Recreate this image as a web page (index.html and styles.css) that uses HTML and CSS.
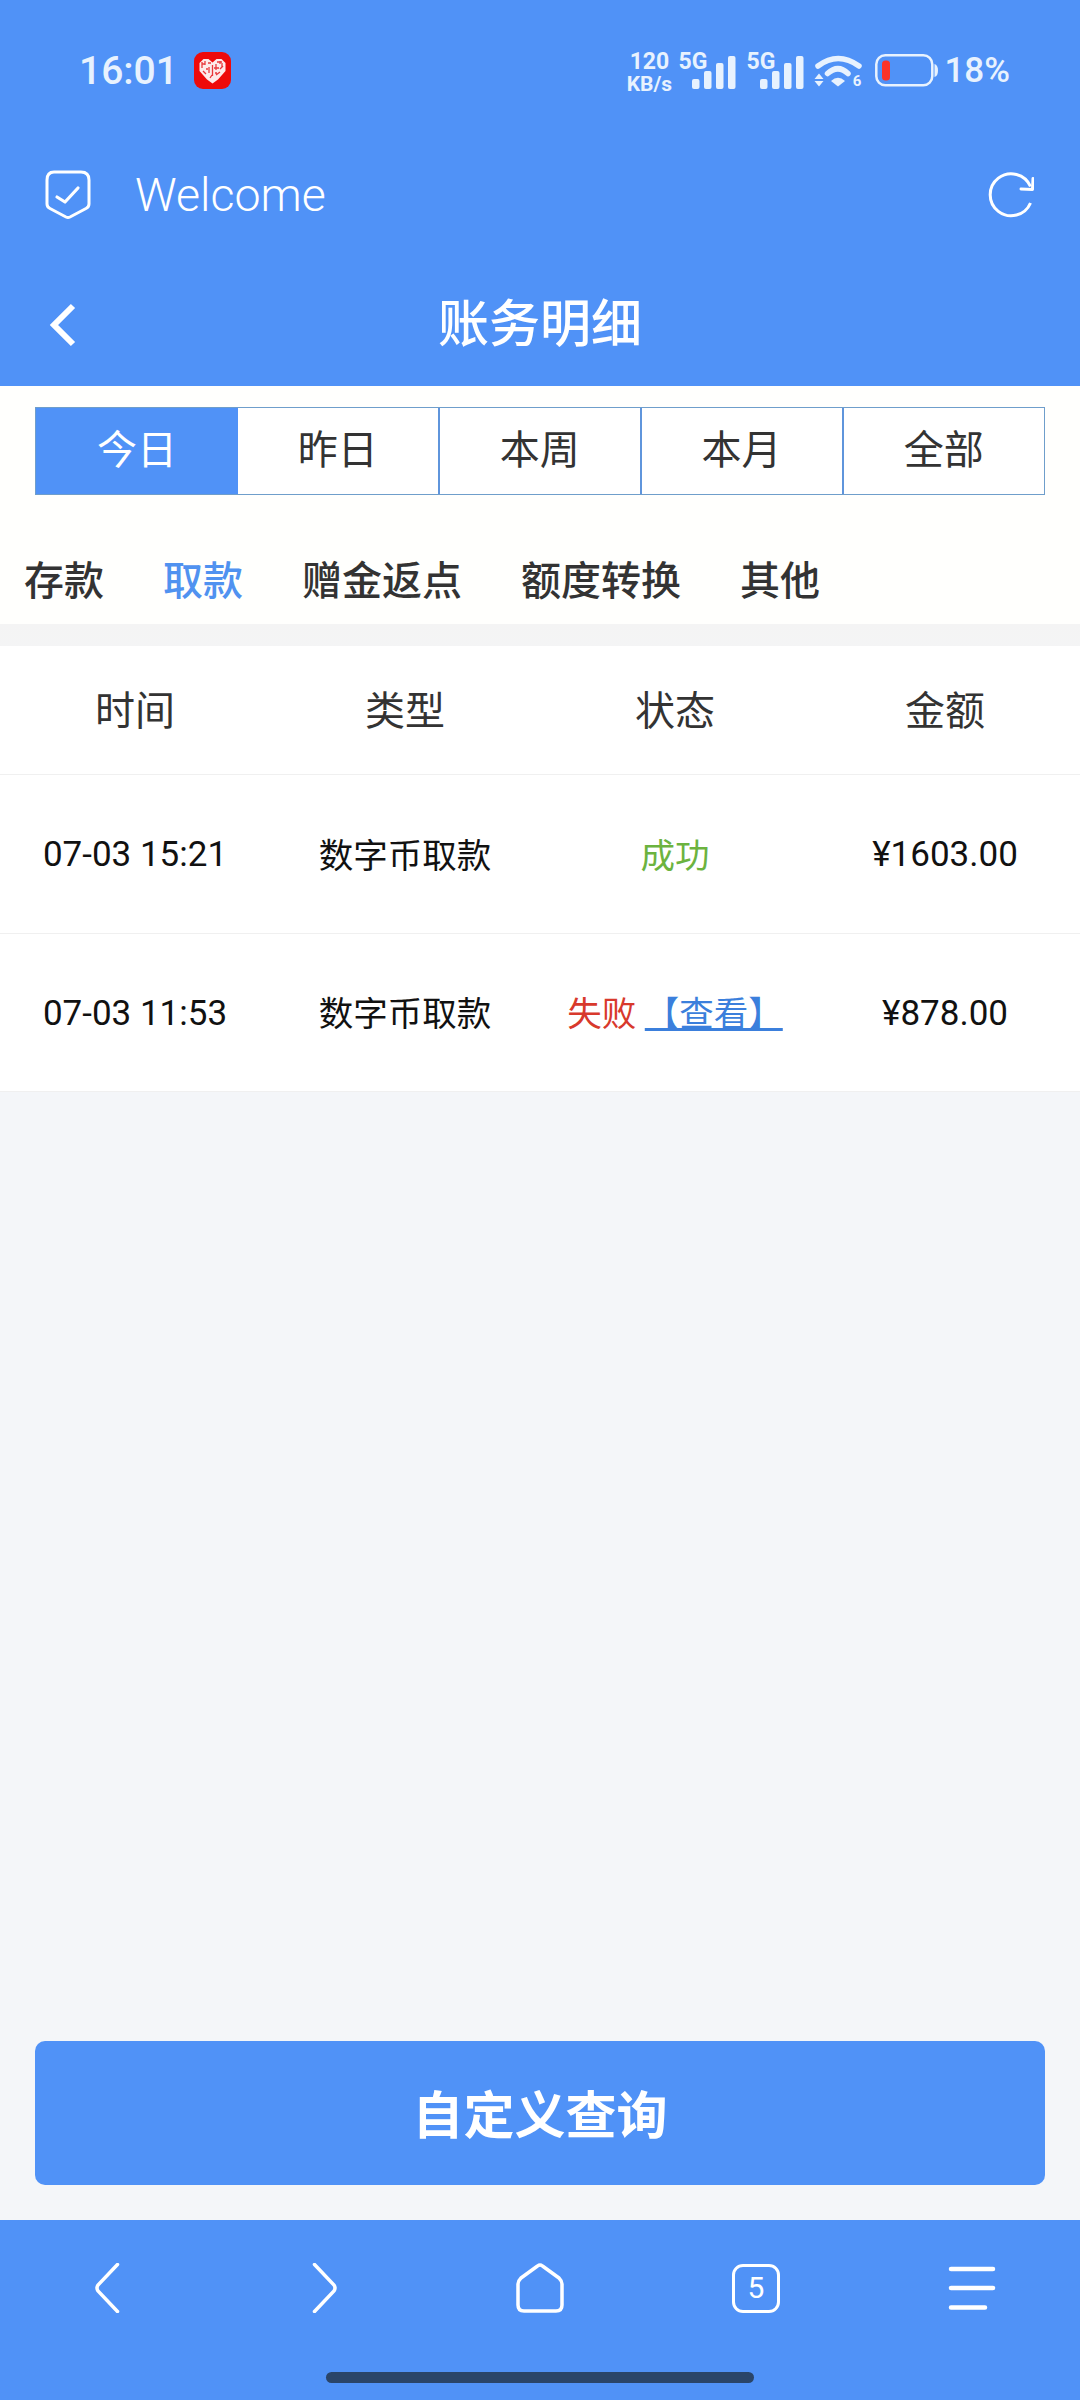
FILE: index.html
```html
<!DOCTYPE html>
<html lang="zh-CN">
<head>
<meta charset="utf-8">
<title>账务明细</title>
<link rel="stylesheet" href="styles.css">
</head>
<body>
<div class="page">
  <header class="top">
    <div class="status">
      <div class="status-left">
        <span class="time">16:01</span>
        <svg class="pdd" viewBox="0 0 37 37" width="37" height="37">
          <rect width="37" height="37" rx="9" fill="#ee0a0a"/>
          <path d="M18.500 10.500 L22.500 7 H27.500 L31.500 11 V19 L24 27.500 L18.500 31.500 L13 27.500 L5.500 19 V11 L9.500 7 H14.500Z" fill="#fdeaea"/>
          <path d="M8 10v6M11 9v4M9 19l3 3M14 11h3M15 15v6M18.500 13v11M22 12v6M20 16h5M26 9v3M23 10h5M29 14l-3 3M22 23l4-3M12 17h2M16 26l2-3M8 12h3M28 11v4M21 21h2" stroke="#e8383c" stroke-width="1.300" fill="none"/>
        </svg>
      </div>
      <div class="status-right">
        <div class="speed"><span class="speed-num">120</span><span class="speed-unit">KB/s</span></div>
        <div class="signal">
          <span class="net">5G</span>
          <svg class="bars" viewBox="0 0 44 33" width="44" height="33"><rect x="0" y="23" width="7.500" height="10" rx="2"/><rect x="12" y="15" width="7.500" height="18" rx="2"/><rect x="24" y="7" width="7.500" height="26" rx="2"/><rect x="36" y="0" width="7.500" height="33" rx="2"/></svg>
        </div>
        <div class="signal">
          <span class="net">5G</span>
          <svg class="bars" viewBox="0 0 44 33" width="44" height="33"><rect x="0" y="23" width="7.500" height="10" rx="2"/><rect x="12" y="15" width="7.500" height="18" rx="2"/><rect x="24" y="7" width="7.500" height="26" rx="2"/><rect x="36" y="0" width="7.500" height="33" rx="2"/></svg>
        </div>
        <div class="wifi">
          <svg viewBox="0 0 46 33" width="46" height="33">
            <path d="M3 12 Q23 -3 44 12" fill="none" stroke="#e8f2fe" stroke-width="5.500" stroke-linecap="round"/>
            <path d="M12.500 19.500 Q23 10 33 19.500" fill="none" stroke="#e8f2fe" stroke-width="5.500" stroke-linecap="round"/>
            <path d="M16 27 Q23 20.500 30 27 L23 32.500Z" fill="#e8f2fe"/>
            <path d="M4 19.500 L8.500 25 H-0.500Z M-0.500 27 H8.500 L4 32.500Z" fill="#e8f2fe"/>
          </svg>
          <span class="wifi-num">6</span>
        </div>
        <svg class="battery" viewBox="0 0 63 33" width="63" height="33">
          <rect x="1.300" y="1.300" width="56" height="30" rx="9" fill="none" stroke="#e8f2fe" stroke-width="2.500"/>
          <path d="M59.500 10 Q63 11 63 16.500 Q63 22 59.500 23Z" fill="#e8f2fe"/>
          <rect x="7" y="6.500" width="8" height="20" rx="3.500" fill="#fb3328"/>
        </svg>
        <span class="pct">18%</span>
      </div>
    </div>
    <div class="welcome">
      <div class="welcome-left">
        <svg class="shield" viewBox="0 0 46 50" width="46" height="50">
          <path d="M9 2 H36 Q44 2 44 10 V34 Q44 37 41 38.500 L25 47 Q23 48 21 47 L5 38.500 Q2 37 2 34 V10 Q2 2 9 2Z" fill="none" stroke="#fff" stroke-width="3"/>
          <path d="M12 27 L20 32 L33 18" fill="none" stroke="#fff" stroke-width="3.200" stroke-linecap="round" stroke-linejoin="round"/>
        </svg>
        <span class="welcome-text">Welcome</span>
      </div>
      <svg class="refresh" viewBox="0 0 46 46" width="46" height="46">
        <path d="M42.500 31 A21 21 0 1 1 42.500 14.500" fill="none" stroke="#fff" stroke-width="3"/>
        <path d="M45 6.500 L44.500 17.500 L33 17" fill="none" stroke="#fff" stroke-width="3" stroke-linecap="round" stroke-linejoin="round"/>
      </svg>
    </div>
    <div class="titlebar">
      <svg class="back" viewBox="0 0 28 44" width="28" height="44"><path d="M25 3 L6 22 L25 41" fill="none" stroke="#fff" stroke-width="6"/></svg>
      <h1 class="title">账务明细</h1>
    </div>
  </header>

  <section class="filters">
    <div class="segments">
      <span class="seg is-active">今日</span>
      <span class="seg">昨日</span>
      <span class="seg">本周</span>
      <span class="seg">本月</span>
      <span class="seg">全部</span>
    </div>
    <nav class="cats">
      <span class="cat">存款</span>
      <span class="cat is-current">取款</span>
      <span class="cat">赠金返点</span>
      <span class="cat">额度转换</span>
      <span class="cat">其他</span>
    </nav>
  </section>

  <main class="content">
    <div class="ledger">
      <div class="row row-head">
        <span>时间</span><span>类型</span><span>状态</span><span>金额</span>
      </div>
      <div class="row">
        <span class="num">07-03 15:21</span><span class="cjk">数字币取款</span><span class="cjk ok">成功</span><span class="num">¥1603.00</span>
      </div>
      <div class="row">
        <span class="num">07-03 11:53</span><span class="cjk">数字币取款</span><span class="cjk"><span class="bad">失败</span> <a class="link">【查看】</a></span><span class="num">¥878.00</span>
      </div>
    </div>
    <button class="query">自定义查询</button>
  </main>

  <footer class="bottom">
    <div class="nav">
      <svg class="nav-icon" viewBox="0 0 50 50" width="50" height="50"><path d="M34.500 1.500 L15 22 Q13 25 15 28 L34.500 48.500" fill="none" stroke="#fff" stroke-width="3.500" stroke-linecap="round"/></svg>
      <svg class="nav-icon" viewBox="0 0 50 50" width="50" height="50"><path d="M15.500 1.500 L35 22 Q37 25 35 28 L15.500 48.500" fill="none" stroke="#fff" stroke-width="3.500" stroke-linecap="round"/></svg>
      <svg class="nav-icon" viewBox="0 0 50 50" width="50" height="50"><path d="M22.500 3 Q25 1 27.500 3 L44 15 Q47 18 47 21 V42 Q47 48 41 48 H9 Q3 48 3 42 V21 Q3 18 6 15Z" fill="none" stroke="#fff" stroke-width="3.500" stroke-linejoin="round"/></svg>
      <span class="tabs-count">5</span>
      <svg class="nav-icon" viewBox="0 0 50 50" width="50" height="50"><path d="M4 6 H46 M4 25 H46 M4 44.500 H38" fill="none" stroke="#fff" stroke-width="4.500" stroke-linecap="round"/></svg>
    </div>
    <div class="home-bar"></div>
  </footer>
</div>
</body>
</html>
```
FILE: styles.css
```css
* { box-sizing: border-box; }
html, body { margin: 0; padding: 0; }
body { font-family: "Roboto", "Noto Sans CJK SC", sans-serif; background: #f4f6f9; color: #333; }
.page { width: 1080px; height: 2400px; display: flex; flex-direction: column; overflow: hidden; }

.top { background: #5092f7; height: 386px; color: #fff; flex: none; }

.status { height: 138px; display: flex; align-items: center; justify-content: space-between; padding: 3px 70px 0 79px; color: #e8f2fe; }
.status-left { display: flex; align-items: center; gap: 16px; }
.time { font-size: 39px; font-weight: 500; line-height: 44px; }
.pdd { display: block; }
.status-right { display: flex; align-items: center; }
.speed { display: flex; flex-direction: column; align-items: center; width: 46px; font-weight: 700; margin-top: 2px; }
.speed-num { font-size: 23px; line-height: 24px; }
.speed-unit { font-size: 21px; line-height: 20px; white-space: nowrap; }
.signal { display: grid; width: 58px; height: 36px; margin-left: 10px; }
.signal > * { grid-area: 1 / 1; }
.net { font-size: 23px; font-weight: 700; line-height: 20px; justify-self: start; align-self: start; margin-top: -1px; }
.bars { fill: #e8f2fe; justify-self: end; align-self: end; display: block; }
.speed + .signal { margin-left: 6px; }
.wifi { display: grid; width: 46px; height: 33px; margin-left: 11px; }
.wifi > * { grid-area: 1 / 1; }
.wifi svg { display: block; overflow: visible; }
.wifi-num { font-size: 15px; font-weight: 700; line-height: 12px; justify-self: end; align-self: end; }
.battery { display: block; margin-left: 14px; }
.pct { font-size: 35px; font-weight: 500; line-height: 40px; margin-left: 6px; }

.welcome { height: 114px; display: flex; align-items: center; justify-content: space-between; padding: 0 46px 0 45px; }
.welcome-left { display: flex; align-items: center; gap: 44px; }
.welcome-text { font-size: 46.500px; font-weight: 300; line-height: 54px; }
.shield, .refresh { display: block; }

.titlebar { height: 134px; display: grid; grid-template-columns: 1fr auto 1fr; align-items: center; padding: 11px 0 0 48px; }
.back { display: block; }
.title { grid-column: 2; margin: 0 0 0 -48px; font-size: 51px; font-weight: 500; line-height: 60px; }

.filters { background: #fffffd; height: 238px; flex: none; padding-top: 21px; }
.segments { display: grid; grid-template-columns: repeat(4, 201.900px) 1fr; margin: 0 35px; height: 88px; border: 1.500px solid #6f9ecb; }
.seg { display: flex; align-items: center; justify-content: center; font-size: 40px; line-height: 56px; background: #fff; border-right: 2px solid #5f95dc; color: #333; }
.seg:last-child { border-right: 0; }
.seg.is-active { background: #5092f7; color: #fff; border-right: 0; }
.cats { display: flex; gap: 59px; padding: 57px 24px 0; }
.cat { font-size: 40px; font-weight: 500; line-height: 60px; color: #333; }
.cat.is-current { color: #5092f0; }

.content { flex: 1; display: flex; flex-direction: column; padding-top: 22px; background: linear-gradient(#f4f4f4, #f4f6f9 100px); }
.ledger { background: #fff; }
.row { display: grid; grid-template-columns: repeat(4, 1fr); height: 158.500px; align-items: center; text-align: center; font-size: 35px; color: #111; border-bottom: 1px solid #f0f0f0; }
.row-head { height: 129px; font-size: 40px; color: #333; padding-bottom: 5px; }
.num { padding-top: 2px; }
.cjk { font-size: 34.500px; padding-bottom: 2px; }
.ok { color: #6cb33f; }
.bad { color: #d8392c; }
.link { color: #3b7fdc; text-decoration: underline; text-decoration-thickness: 3px; text-underline-offset: 2px; }

.query { margin: auto 35px 35px; height: 144px; border: 0; border-radius: 10px; padding: 0 0 3px; background: #5092f7; color: #fff; font-family: inherit; font-size: 51px; font-weight: 700; }

.bottom { background: #5092f7; height: 180px; flex: none; padding-top: 43px; }
.nav { display: grid; grid-template-columns: repeat(5, 1fr); justify-items: center; align-items: center; height: 50px; }
.nav-icon { display: block; }
.tabs-count { width: 48px; height: 49px; border: 3.500px solid #fff; border-radius: 11px; color: #fff; font-size: 30px; line-height: 42px; text-align: center; }
.home-bar { width: 428px; height: 11px; margin: 59px auto 0; border-radius: 6px; background: #2a4569; }
```
